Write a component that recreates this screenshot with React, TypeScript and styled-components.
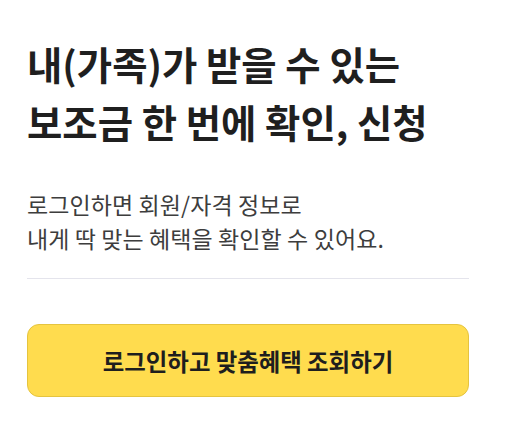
import React from 'react';
import styled, { createGlobalStyle } from 'styled-components';

const GlobalStyle = createGlobalStyle`
  body {
    margin: 0;
    background: #ffffff;
    font-family: 'Noto Sans CJK KR', 'Noto Sans', sans-serif;
  }
`;

function App() {
  return (
    <>
      <GlobalStyle />
      <Container>
        <Title>
          내(가족)가 받을 수 있는
          <br />
          보조금 한 번에 확인, 신청
        </Title>
        <Description>
          로그인하면 회원/자격 정보로
          <br />
          내게 딱 맞는 혜택을 확인할 수 있어요.
        </Description>
        <Divider />
        <LoginButton type="button">로그인하고 맞춤혜택 조회하기</LoginButton>
      </Container>
    </>
  );
}

const Container = styled.div`
  width: 442px;
  padding: 34px 0 0 27px;
`;

const Title = styled.h1`
  margin: 0;
  font-size: 38.4px;
  font-weight: 700;
  line-height: 58px;
  color: #1f1f1f;
`;

const Description = styled.p`
  margin: 37px 0 0;
  font-size: 23px;
  font-weight: 400;
  line-height: 34px;
  letter-spacing: 0.1px;
  color: #3d3d3d;
`;

const Divider = styled.hr`
  margin: 23px 0 0;
  border: none;
  border-top: 1px solid #e4e4ec;
`;

const LoginButton = styled.button`
  display: flex;
  align-items: center;
  justify-content: center;
  width: 100%;
  height: 73px;
  margin-top: 45px;
  padding: 0;
  border: 1px solid #e5c43f;
  border-radius: 12px;
  background: #ffdc4e;
  font-family: inherit;
  font-size: 23.4px;
  font-weight: 700;
  color: #1e1e1e;
  cursor: pointer;
`;

export default App;
